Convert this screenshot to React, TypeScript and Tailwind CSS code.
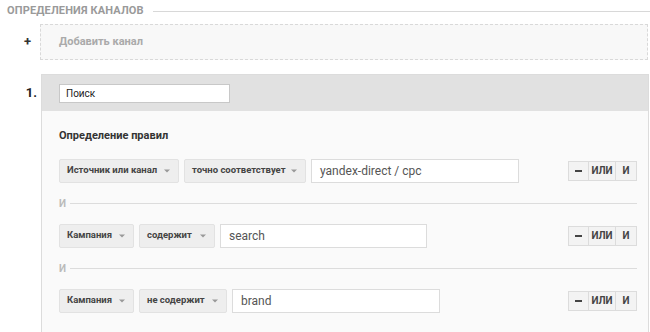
import React from "react";

function Select({ label, w }: { label: string; w: string }) {
  return (
    <div
      className={`flex h-[24px] flex-none items-center justify-between whitespace-nowrap rounded-[2px] border border-[#e2e2e2] bg-[#eeeeee] pl-[7px] pr-[8px] text-[9.5px] font-bold text-[#444] ${w}`}
    >
      <span>{label}</span>
      <svg width="6" height="4" viewBox="0 0 6 4">
        <path d="M0 0.5 L6 0.5 L3 3.5 Z" fill="#999" />
      </svg>
    </div>
  );
}

function Buttons() {
  return (
    <div className="ml-auto mt-[2px] flex h-[20px] self-start border border-[#dcdcdc] bg-[#f3f3f3] text-[10px] font-bold text-[#444]">
      <div className="flex w-[20px] items-center justify-center border-r border-[#dcdcdc]">
        <div className="h-[2px] w-[7px] bg-[#444]" />
      </div>
      <div className="flex w-[27px] items-center justify-center border-r border-[#dcdcdc]">ИЛИ</div>
      <div className="flex w-[20px] items-center justify-center">И</div>
    </div>
  );
}

function Row({
  a,
  aw,
  b,
  bw,
  value,
  vw,
}: {
  a: string;
  aw: string;
  b: string;
  bw: string;
  value: string;
  vw: string;
}) {
  return (
    <div className="flex items-start gap-[5px]">
      <Select label={a} w={aw} />
      <Select label={b} w={bw} />
      <div
        className={`flex h-[24px] flex-none items-center border border-[#dcdcdc] bg-white pl-[8px] text-[12px] text-[#555] ${vw}`}
      >
        {value}
      </div>
      <Buttons />
    </div>
  );
}

function Sep() {
  return (
    <div className="flex h-[41px] items-center gap-[4px]">
      <span className="text-[10px] font-bold text-[#bbb]">И</span>
      <div className="h-px flex-1 bg-[#dcdcdc]" />
    </div>
  );
}

export default function App() {
  return (
    <div
      className="h-[332px] w-[650px] overflow-hidden bg-white"
      style={{ fontFamily: "Roboto, 'Liberation Sans', sans-serif" }}
    >
      <div className="flex h-[22px] items-center pl-[7px] pr-0 pt-[1px]">
        <span className="text-[11px] font-bold tracking-[0.15px] text-[#9a9a9a]">ОПРЕДЕЛЕНИЯ КАНАЛОВ</span>
        <div className="ml-[9px] h-px flex-1 bg-[#d8d8d8]" />
      </div>
      <div className="mt-[2px] flex">
        <div className="flex w-[40px] items-center justify-end pr-[9px] text-[13px] font-bold text-[#333]">
          +
        </div>
        <div className="flex h-[36px] w-[608px] items-center border border-dashed border-[#d9d9d9] bg-[#f8f8f8] pl-[18px] text-[11px] font-bold text-[#aaa]">
          Добавить канал
        </div>
      </div>
      <div className="mt-[14px] flex">
        <div className="w-[41px] pr-[4px] pt-[9px] text-right text-[13px] font-bold text-[#222]">1.</div>
        <div className="w-[608px] border-l border-r border-t border-[#dcdcdc]">
          <div className="flex h-[36px] items-center bg-[#e1e1e1] pl-[17px]">
            <div className="flex h-[19px] w-[171px] items-center border border-[#c8c8c8] bg-white pl-[6px] text-[10px] text-[#222]">
              Поиск
            </div>
          </div>
          <div className="h-[300px] bg-[#fafafa] pl-[17px] pr-[11px]">
            <div className="pt-[17px] text-[11px] font-bold text-[#333]">Определение правил</div>
            <div className="mt-[14px]">
              <Row
                a="Источник или канал"
                aw="w-[120px]"
                b="точно соответствует"
                bw="w-[122px]"
                value="yandex-direct / cpc"
                vw="w-[208px]"
              />
              <Sep />
              <Row a="Кампания" aw="w-[75px]" b="содержит" bw="w-[76px]" value="search" vw="w-[207px]" />
              <Sep />
              <Row a="Кампания" aw="w-[75px]" b="не содержит" bw="w-[88px]" value="brand" vw="w-[208px]" />
            </div>
          </div>
        </div>
      </div>
    </div>
  );
}
